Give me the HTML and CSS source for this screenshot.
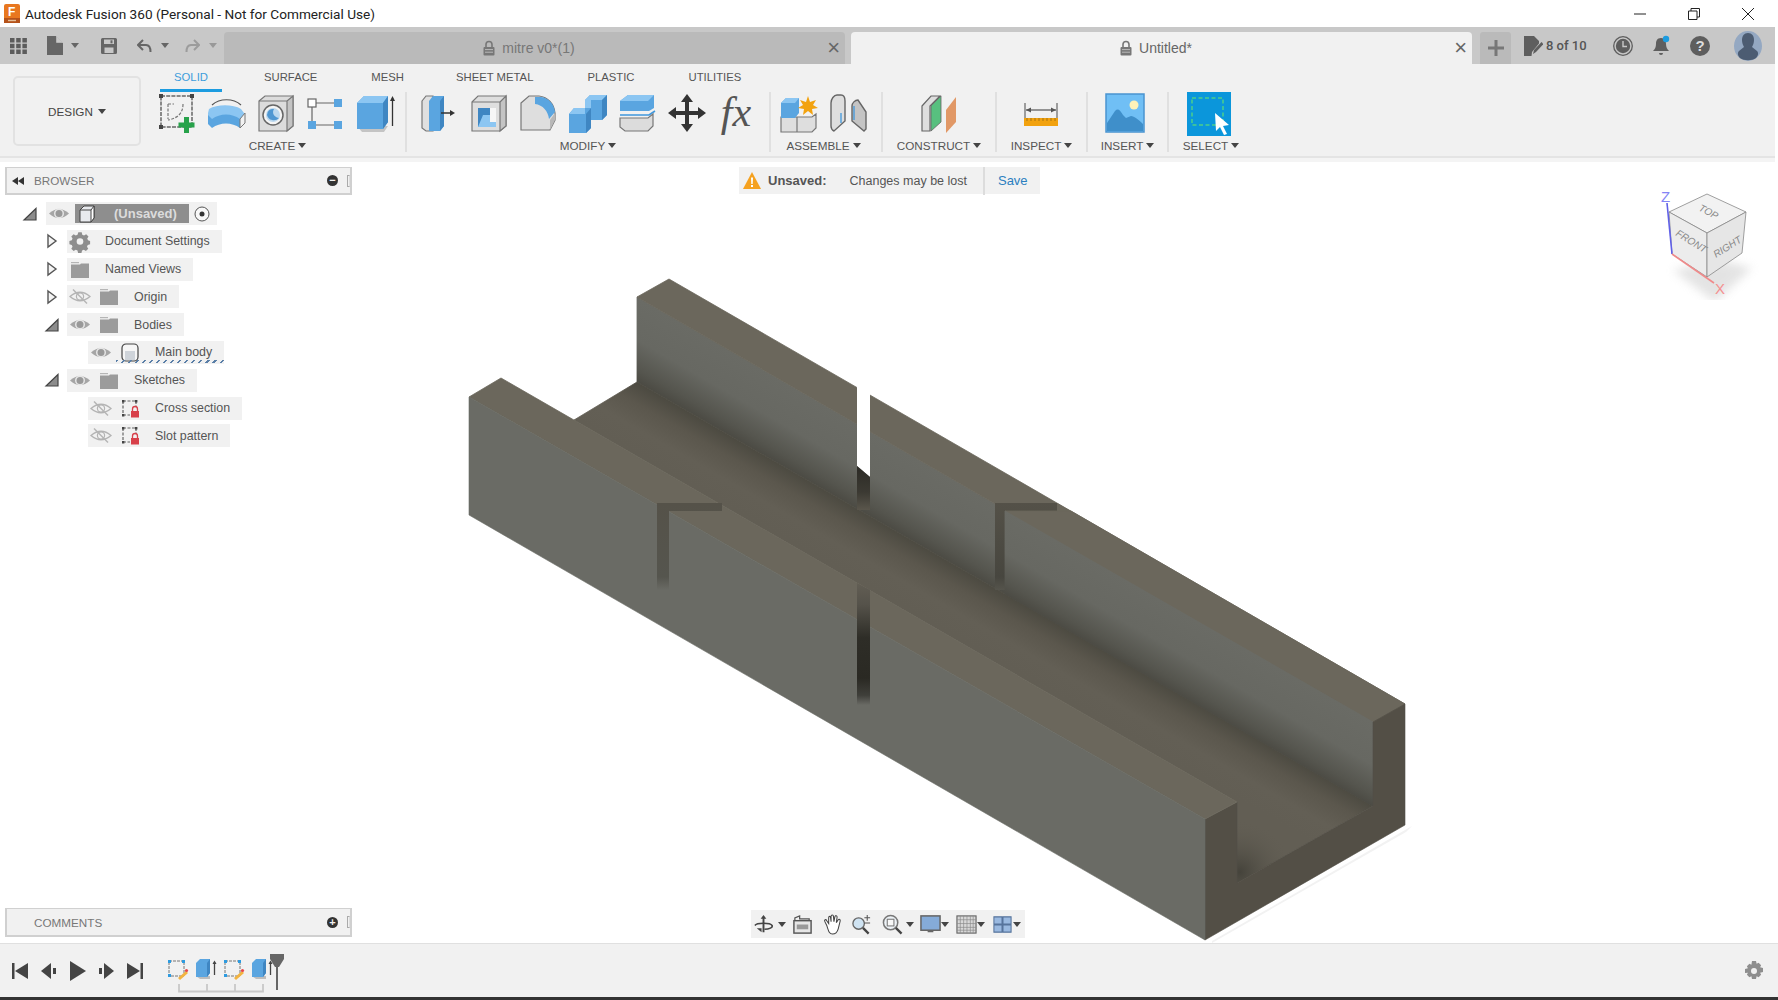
FILE: index.html
```html
<!DOCTYPE html>
<html lang="en">
<head>
  <meta charset="UTF-8">
  <meta name="viewport" content="width=device-width, initial-scale=1.0">
  <title>Autodesk Fusion 360</title>
  <link rel="stylesheet" href="styles.css">
</head>
<body>

<svg class="defs" width="0" height="0">
  <defs>
    <symbol id="eye" viewBox="0 0 26 23">
      <path d="M3 11.500Q13 2.500 23 11.500Q13 20.500 3 11.500z" fill="#a6a6a6"/>
      <circle cx="13" cy="11.500" r="5" fill="#e6e6e6"/>
      <circle cx="13" cy="11.500" r="3.500" fill="#999"/>
    </symbol>
    <symbol id="eye-off" viewBox="0 0 26 23">
      <path d="M3 11.500Q13 3 23 11.500Q13 20 3 11.500z" fill="none" stroke="#b4b4b4" stroke-width="1.300"/>
      <circle cx="13" cy="11.500" r="3.600" fill="none" stroke="#b4b4b4" stroke-width="1.200"/>
      <path d="M6 4.500l14 14" stroke="#b4b4b4" stroke-width="1.400"/>
    </symbol>
    <symbol id="folder" viewBox="0 0 26 23">
      <path d="M4 4h8v1.200H4z" fill="#b5b5b5"/>
      <path d="M4 6.500h9l1-1h8V20H4z" fill="#9b9b9b"/>
    </symbol>
    <symbol id="sketch-lock" viewBox="0 0 26 23">
      <path d="M6 4h13M6 4v14M6 18h7M19 4v6" fill="none" stroke="#666" stroke-width="1.200" stroke-dasharray="3 1.500"/>
      <path d="M5 3h2.400v2.400H5zM18 3h2.400v2.400H18zM5 17h2.400v2.400H5z" fill="#444"/>
      <path d="M15.500 14v-2a2.500 2.500 0 0 1 5 0v2" fill="none" stroke="#d8404a" stroke-width="1.300"/>
      <rect x="14" y="14" width="8" height="6.500" fill="#d8404a"/>
    </symbol>
    <symbol id="twisty-open" viewBox="0 0 16 16">
      <path d="M2 14L14 2.500V14z" fill="#8c8c8c" stroke="#444" stroke-width="1.200"/>
    </symbol>
    <symbol id="twisty-closed" viewBox="0 0 16 16">
      <path d="M4 2l8 6-8 6z" fill="#f4f4f4" stroke="#555" stroke-width="1.400"/>
    </symbol>
    <symbol id="lock" viewBox="0 0 14 16">
      <path d="M4 7V4.500a3 3 0 0 1 6 0V7" fill="none" stroke="#777" stroke-width="1.600"/>
      <rect x="1.500" y="7" width="11" height="8.500" rx="1" fill="#777"/>
      <path d="M3 9.600h8M3 12.200h8" stroke="#ccc" stroke-width="0.800"/>
    </symbol>
    <symbol id="tl-sketch" viewBox="0 0 22 22">
      <rect x="2" y="3" width="15" height="15" fill="none" stroke="#777" stroke-width="1" stroke-dasharray="3 1"/>
      <path d="M1 2h3v3H1zM15 2h3v3h-3zM1 16h3v3H1z" fill="#2d9be0"/>
      <path d="M11 20l8-7 2 2-8 7z" fill="#f2b441"/>
      <circle cx="19.500" cy="12.500" r="1.600" fill="#e8484a"/>
    </symbol>
    <symbol id="tl-extrude" viewBox="0 0 22 22">
      <path d="M1 18l4 3h10v-3z" fill="#bdbdbd"/>
      <path d="M1 5l4-4h10v14l-3 4H1z" fill="#5aa5e0"/>
      <path d="M12 5l3-4v14l-3 4z" fill="#3f86c2"/>
      <path d="M19.500 17V4" stroke="#444" stroke-width="1.300"/>
      <path d="M17.500 6l2-3.500 2 3.500z" fill="#444"/>
    </symbol>
  </defs>
</svg>

<div class="window">
  <header class="titlebar">
    <svg class="app-logo" viewBox="0 0 18 19" width="18" height="19">
      <rect x="1" y="0" width="16" height="19" rx="2" fill="#e8771f"/>
      <rect x="1" y="14" width="16" height="5" fill="#b5521a"/>
      <rect x="5" y="15.800" width="8" height="1.400" fill="#e5c09a"/>
      <text x="5" y="12" class="app-logo-letter">F</text>
    </svg>
    <span class="title-text">Autodesk Fusion 360 (Personal - Not for Commercial Use)</span>
    <div class="win-controls">
      <svg viewBox="0 0 12 12" width="12" height="12"><path d="M0 6h12" stroke="#222" stroke-width="1"/></svg>
      <svg viewBox="0 0 12 12" width="12" height="12"><path d="M.5 3h8.500v8.500H.5zM3 3V.5h8.500V9H9" fill="none" stroke="#222" stroke-width="1"/></svg>
      <svg viewBox="0 0 12 12" width="12" height="12"><path d="M0 0l12 12M12 0L0 12" stroke="#222" stroke-width="1"/></svg>
    </div>
  </header>

  <div class="tabbar">
    <div class="quick-tools">
      <svg class="qt-grid" viewBox="0 0 17 16" width="17" height="16">
        <path d="M0 0h4.500v4.500H0zM6.200 0h4.500v4.500H6.200zM12.400 0h4.500v4.500h-4.500zM0 5.800h4.500v4.500H0zM6.200 5.800h4.500v4.500H6.200zM12.400 5.800h4.500v4.500h-4.500zM0 11.600h4.500v4.400H0zM6.200 11.600h4.500v4.400H6.200zM12.400 11.600h4.500v4.400h-4.500z" fill="#5c5c5c"/>
      </svg>
      <svg class="qt-file" viewBox="0 0 16 19" width="16" height="19"><path d="M0 0h9l7 7v12H0z" fill="#666"/><path d="M9.500 0v6.500H16" fill="#c8c8c8" stroke="#c8c8c8" stroke-width=".6"/></svg>
      <i class="caret qt-caret"></i>
      <svg class="qt-save" viewBox="0 0 16 16" width="16" height="16"><path d="M0 1.500A1.500 1.500 0 0 1 1.500 0h13A1.500 1.500 0 0 1 16 1.500v13a1.500 1.500 0 0 1-1.500 1.500h-13A1.500 1.500 0 0 1 0 14.500z" fill="#666"/><path d="M3 1.500h10v4.500H3zM3.500 9.500h9V15h-9z" fill="#c8c8c8"/><path d="M9.500 2.300h2v3h-2z" fill="#666"/></svg>
      <svg class="qt-undo" viewBox="0 0 15 14" width="15" height="14"><path d="M6 1L1 6l5 5M1.500 6H9c3 0 4.500 2 4.500 7" fill="none" stroke="#666" stroke-width="2"/></svg>
      <i class="caret qt-caret-sm"></i>
      <svg class="qt-redo" viewBox="0 0 15 14" width="15" height="14"><path d="M9 1l5 5-5 5M13.500 6H6c-3 0-4.500 2-4.500 7" fill="none" stroke="#9c9c9c" stroke-width="2"/></svg>
      <i class="caret qt-caret-sm qt-caret-off"></i>
    </div>
    <div class="doc-tab doc-tab-off">
      <span class="doc-name"><svg width="14" height="16"><use href="#lock"/></svg>mitre v0*(1)</span>
      <span class="doc-close">×</span>
    </div>
    <div class="doc-tab doc-tab-on">
      <span class="doc-name"><svg width="14" height="16"><use href="#lock"/></svg>Untitled*</span>
      <span class="doc-close">×</span>
    </div>
    <div class="new-tab">
      <svg viewBox="0 0 16 16" width="16" height="16"><path d="M8 0v16M0 8h16" stroke="#777" stroke-width="3"/></svg>
    </div>
    <div class="job-status">
      <svg viewBox="0 0 19 20" width="19" height="20"><path d="M0 0h10l5 5v2.500L8 16l-.5 4H0z" fill="#5e5e5e"/><path d="M9 18l1-4 7.500-8 2 2-7.500 8z" fill="#5e5e5e"/></svg>
      <span>8 of 10</span>
    </div>
    <svg class="status-icon clock-icon" viewBox="0 0 20 20" width="20" height="20"><circle cx="10" cy="10" r="9.300" fill="none" stroke="#5e5e5e" stroke-width="1.300"/><circle cx="10" cy="10" r="7.200" fill="#5e5e5e"/><path d="M10 5v5.500h4" fill="none" stroke="#c8c8c8" stroke-width="1.400"/></svg>
    <svg class="status-icon bell-icon" viewBox="0 0 20 22" width="20" height="22"><path d="M9 3c4 0 5 3 5 6 0 3 1 5 3 7H1c2-2 3-4 3-7 0-3 1-6 5-6z" fill="#5e5e5e"/><path d="M7 18h4a2 2 0 0 1-4 0z" fill="#5e5e5e"/><circle cx="14" cy="4" r="3.200" fill="#1c9ce0"/></svg>
    <svg class="status-icon help-icon" viewBox="0 0 20 20" width="20" height="20"><circle cx="10" cy="10" r="10" fill="#5e5e5e"/><text x="10" y="15" class="help-mark">?</text></svg>
    <svg class="avatar" viewBox="0 0 28 30" width="28" height="30"><ellipse cx="14" cy="15" rx="14" ry="15" fill="#94a8c2"/><path d="M14 2c4 0 6 3 6 7 0 3-1 5-2 7l5 4c2 2 1 5-1 7-4 3-12 3-16 0-2-2-3-5-1-7l5-4c-1-2-2-4-2-7 0-4 2-7 6-7z" fill="#4c5c72"/></svg>
  </div>

  <div class="toolbar">
    <button class="design-btn">DESIGN<i class="caret"></i></button>
    <div class="toolbar-main">
      <nav class="mode-tabs">
        <span class="mode-tab mode-solid">SOLID</span>
        <span class="mode-tab mode-surface">SURFACE</span>
        <span class="mode-tab mode-mesh">MESH</span>
        <span class="mode-tab mode-sheet">SHEET METAL</span>
        <span class="mode-tab mode-plastic">PLASTIC</span>
        <span class="mode-tab mode-util">UTILITIES</span>
      </nav>
      <div class="tool-groups">

        <section class="tool-group g-create">
          <div class="tool-icons">
            <svg class="tool" viewBox="0 0 40 40">
              <rect x="4" y="3" width="31" height="31" fill="none" stroke="#666" stroke-width="1.500" stroke-dasharray="4 1.200"/>
              <path d="M2 1h4v4H2zM33 1h4v4h-4zM2 32h4v4H2z" fill="#444"/>
              <path d="M11 11h6M11 11v15M26 11c0 8-4 14-15 16" fill="none" stroke="#777" stroke-width="1.200" stroke-dasharray="3 1.500"/>
              <path d="M27 24h5v5.500h5.500v5H32V40h-5v-5.500h-5.500v-5H27z" fill="#27a24a"/>
            </svg>
            <svg class="tool" viewBox="0 0 40 40">
              <path d="M6 12C14 5 27 5 35 12" fill="none" stroke="#555" stroke-width="1.200"/>
              <path d="M3 16c8-5 24-5 32 0l3 4v9l-4 5c-8-6-20-6-28 0l-4-5V20z" fill="#8cc6f2"/>
              <path d="M2 22l4 4c8-6 20-6 28 0v9c-8-6-20-6-28 0l-4-4z" fill="#5aa5e0"/>
              <path d="M34 26l5-6v10l-5 5z" fill="#f2f2f2" stroke="#777"/>
            </svg>
            <svg class="tool" viewBox="0 0 40 40">
              <path d="M3 8l6-5h28v30l-6 5H3z" fill="#dcdcdc" stroke="#777" stroke-width="1.200"/>
              <path d="M31 8l6-5v30l-6 5zM3 8h28" fill="#c4c4c4" stroke="#777" stroke-width="1.200"/>
              <circle cx="17" cy="22" r="10" fill="#f4f4f4" stroke="#666" stroke-width="1.500"/>
              <circle cx="17" cy="22" r="7" fill="#bcd8ee"/>
              <path d="M11 22a6 6 0 0 1 7-6c-2 3-1 8 5 9a7 7 0 0 1-12-3z" fill="#4f97d2"/>
            </svg>
            <svg class="tool" viewBox="0 0 40 40">
              <rect x="3" y="6" width="8" height="8" fill="#fff" stroke="#666" stroke-width="1.200"/>
              <rect x="29" y="6" width="8" height="8" fill="#5aa5e0"/>
              <rect x="3" y="28" width="8" height="8" fill="#5aa5e0"/>
              <rect x="29" y="28" width="8" height="8" fill="#5aa5e0"/>
              <path d="M11 10h18M11 32h18M7 14v14" stroke="#666" stroke-width="1.200"/>
            </svg>
            <svg class="tool" viewBox="0 0 40 40">
              <path d="M2 33l5 6h22l4-6z" fill="#c4c4c4"/>
              <path d="M2 10l7-7h24v26l-5 7H2z" fill="#5aa5e0"/>
              <path d="M2 10l7-7h24l-5 7z" fill="#8cc6f2"/>
              <path d="M28 10l5-7v26l-5 7z" fill="#3f86c2"/>
              <path d="M37.500 33V5" stroke="#333" stroke-width="1.300"/>
              <path d="M35 8l2.500-5L40 8z" fill="#333"/>
            </svg>
          </div>
          <div class="group-label">CREATE<i class="caret"></i></div>
        </section>

        <section class="tool-group g-modify">
          <div class="tool-icons">
            <svg class="tool" viewBox="0 0 40 40">
              <path d="M3 8l4-5h7v35H7l-4-3z" fill="#e0e0e0" stroke="#777" stroke-width="1.200"/>
              <path d="M10 8l4-5h11v30l-4 5H10z" fill="#5aa5e0"/>
              <path d="M21 8l4-5v30l-4 5z" fill="#3f86c2"/>
              <path d="M22 20h11" stroke="#333" stroke-width="1.500"/>
              <path d="M31 17l5 3-5 3z" fill="#333"/>
            </svg>
            <svg class="tool" viewBox="0 0 40 40">
              <path d="M3 9l6-6h28v30l-6 5H3z" fill="#dedede" stroke="#777" stroke-width="1.200"/>
              <path d="M31 9l6-6v30l-6 5zM3 9h28" fill="#c4c4c4" stroke="#777" stroke-width="1.200"/>
              <path d="M9 15h12v14h6v5H9z" fill="#3f86c2"/>
              <path d="M14 22h7v7h6v5H9z" fill="#8cc6f2"/>
              <path d="M21 15h6v14h-6z" fill="#f6f6f6"/>
            </svg>
            <svg class="tool" viewBox="0 0 40 40">
              <path d="M3 10l8-7h10c9 1 15 8 16 17v7l-5 10H3z" fill="#dedede" stroke="#777" stroke-width="1.200"/>
              <path d="M32 27l5-7v7l-5 10z" fill="#b8b8b8"/>
              <path d="M17 4h6c8 1 13 7 14 15l-6 7c-1-8-6-14-14-15z" fill="#5aa5e0"/>
            </svg>
            <svg class="tool" viewBox="0 0 40 40">
              <path d="M1 21l5-6h11V7l5-5h17v20l-5 5H23v8l-5 5H1z" fill="#5aa5e0"/>
              <path d="M17 15V7l5-5h17l-5 5H23v8zM1 21l5-6h11v6z" fill="#8cc6f2"/>
              <path d="M34 7l5-5v20l-5 5zM18 21l5-6v20l-5 5z" fill="#3f86c2"/>
            </svg>
            <svg class="tool" viewBox="0 0 40 40">
              <path d="M3 8l8-6h26v13l-5 3H3z" fill="#5aa5e0"/>
              <path d="M3 8l8-6h26l-6 6z" fill="#8cc6f2"/>
              <path d="M3 22h29l6-4" fill="none" stroke="#3f97dc" stroke-width="1.600"/>
              <path d="M3 25h28l5-4v12l-5 5H8l-5-4z" fill="#dcdcdc" stroke="#777" stroke-width="1.200"/>
            </svg>
            <svg class="tool" viewBox="0 0 40 40">
              <path d="M20 1l6 8h-4v9h9v-4l8 6-8 6v-4h-9v9h4l-6 8-6-8h4v-9H9v4l-8-6 8-6v4h9V9h-4z" fill="#333"/>
            </svg>
            <span class="tool tool-fx">fx</span>
          </div>
          <div class="group-label">MODIFY<i class="caret"></i></div>
        </section>

        <section class="tool-group g-assemble">
          <div class="tool-icons">
            <svg class="tool" viewBox="0 0 40 40">
              <path d="M2 24h16v15H2zM18 24h15l4-3v14l-4 4H18z" fill="#dedede" stroke="#777" stroke-width="1.200"/>
              <path d="M2 10l5-5h13v15l-4 5H2z" fill="#5aa5e0"/>
              <path d="M2 10l5-5h13l-4 5z" fill="#8cc6f2"/>
              <path d="M29 3l2 6 6-2-3 5 5 3-6 1 1 6-5-4-5 4 1-6-6-1 5-3-3-5 6 2z" fill="#f2a20f"/>
            </svg>
            <svg class="tool" viewBox="0 0 40 40">
              <path d="M3 10c0-4 3-8 6-8h4c3 0 4 3 4 6v20L6 38c-2-1-3-3-3-5z" fill="#dedede" stroke="#666" stroke-width="1.400"/>
              <path d="M24 13c0-3 3-6 6-6l8 12v17l-2 2-12-10z" fill="#c4c4c4" stroke="#666" stroke-width="1.400"/>
              <path d="M13 20v10M26 13v14" stroke="#3f97dc" stroke-width="1.300"/>
            </svg>
          </div>
          <div class="group-label">ASSEMBLE<i class="caret"></i></div>
        </section>

        <section class="tool-group g-construct">
          <div class="tool-icons">
            <svg class="tool" viewBox="0 0 40 40">
              <path d="M4 13L13 3h9L12 13v25H4z" fill="#dedede" stroke="#666" stroke-width="1.200"/>
              <path d="M13 13L23 3v26L13 38z" fill="#58c07f" stroke="#666" stroke-width=".8"/>
              <path d="M28 17l10-13v25l-10 11z" fill="#e19866"/>
            </svg>
          </div>
          <div class="group-label">CONSTRUCT<i class="caret"></i></div>
        </section>

        <section class="tool-group g-inspect">
          <div class="tool-icons">
            <svg class="tool" viewBox="0 0 40 40">
              <path d="M4 10v15M36 10v15" stroke="#666" stroke-width="1.200"/>
              <path d="M5 17h30" stroke="#555" stroke-width="1.200"/>
              <path d="M5 17l5-2.500v5zM35 17l-5-2.500v5z" fill="#555"/>
              <rect x="3" y="25" width="34" height="8" fill="#f2a20f"/>
              <path d="M6 25v3M10 25v3M14 25v3M18 25v3M22 25v3M26 25v3M30 25v3M34 25v3" stroke="#a87410" stroke-width="1"/>
            </svg>
          </div>
          <div class="group-label">INSPECT<i class="caret"></i></div>
        </section>

        <section class="tool-group g-insert">
          <div class="tool-icons">
            <svg class="tool" viewBox="0 0 40 40">
              <rect x="1" y="1" width="38" height="38" fill="#70bff5" stroke="#4a94d0" stroke-width="1.500"/>
              <circle cx="29" cy="12" r="4.500" fill="#fff2b8"/>
              <path d="M2 30l8-12c3-3 5-1 8 4l3 3 5-2c3 0 8 4 12 8v7H2z" fill="#3f8fca"/>
            </svg>
          </div>
          <div class="group-label">INSERT<i class="caret"></i></div>
        </section>

        <section class="tool-group g-select">
          <div class="tool-icons">
            <svg class="tool tool-select" viewBox="0 0 44 44">
              <rect width="44" height="44" fill="#0b96db"/>
              <rect x="5" y="6" width="31" height="27" fill="none" stroke="#4ccf8c" stroke-width="1.500" stroke-dasharray="4 2.500"/>
              <path d="M28 21l1 18 4-4 4 8 3-1-4-8 6-1z" fill="#fff"/>
            </svg>
          </div>
          <div class="group-label">SELECT<i class="caret"></i></div>
        </section>

      </div>
    </div>
  </div>

  <main class="viewport">
    <svg class="model" viewBox="0 162 1778 781" width="1778" height="781">
      <defs>
        <linearGradient id="back-wall" gradientUnits="userSpaceOnUse" x1="637" y1="297" x2="600" y2="361">
          <stop offset="0" stop-color="#6a6b65"/>
          <stop offset="0.5" stop-color="#676862"/>
          <stop offset="0.85" stop-color="#55554e"/>
          <stop offset="1" stop-color="#4b4a43"/>
        </linearGradient>
        <linearGradient id="floor" gradientUnits="userSpaceOnUse" x1="637" y1="382" x2="606" y2="436">
          <stop offset="0" stop-color="#4c4a41"/>
          <stop offset="0.3" stop-color="#5b574d"/>
          <stop offset="0.65" stop-color="#635f55"/>
          <stop offset="1" stop-color="#625e54"/>
        </linearGradient>
        <linearGradient id="cut-deep" x1="0" y1="0" x2="0" y2="1">
          <stop offset="0" stop-color="#625e54"/>
          <stop offset="0.18" stop-color="#55524a"/>
          <stop offset="0.45" stop-color="#2e2d27"/>
          <stop offset="0.78" stop-color="#2a2923"/>
          <stop offset="0.92" stop-color="#3f3f3a"/>
          <stop offset="1" stop-color="#6a6b65"/>
        </linearGradient>
        <linearGradient id="cut-back" x1="0" y1="0" x2="0" y2="1">
          <stop offset="0" stop-color="#2b2a25"/>
          <stop offset="0.6" stop-color="#3c3a33"/>
          <stop offset="1" stop-color="#5a564c"/>
        </linearGradient>
        <linearGradient id="notch" x1="0" y1="0" x2="0" y2="1">
          <stop offset="0" stop-color="#555249"/>
          <stop offset="0.85" stop-color="#55554e"/>
          <stop offset="1" stop-color="#6a6b65"/>
        </linearGradient>
        <linearGradient id="notch-dark" x1="0" y1="0" x2="0" y2="1">
          <stop offset="0" stop-color="#545148"/>
          <stop offset="0.85" stop-color="#47463f"/>
          <stop offset="1" stop-color="#55544c"/>
        </linearGradient>
        <radialGradient id="floor-corner" gradientUnits="userSpaceOnUse" cx="1240" cy="872" r="52">
          <stop offset="0" stop-color="#45433b"/>
          <stop offset="1" stop-color="#625e54" stop-opacity="0"/>
        </radialGradient>
      </defs>
      <polygon points="1212,941 1412,826 1406,832 1212,943" fill="#f2f2f2"/>
      <polygon points="637,297 1373,722 1373,806 637,382" fill="url(#back-wall)" stroke="url(#back-wall)" stroke-width=".8"/>
      <polygon points="669,279 1405,704 1373,722 637,297" fill="#6b675c" stroke="#6b675c" stroke-width=".8"/>
      <polygon points="574,420 637,382 1373,806 1237,883 1237,802" fill="url(#floor)" stroke="url(#floor)" stroke-width=".8"/>
      <polygon points="574,420 637,382 1373,806 1237,883 1237,802" fill="url(#floor-corner)"/>
      <polygon points="857,380 870,380 870,477 857,466" fill="#fff"/>
      <polygon points="857,466 870,477 870,510 857,510" fill="url(#cut-back)"/>
      <polygon points="995,503 1057,503 1057,511 1005,511 1005,590 995,590" fill="url(#notch-dark)"/>
      <polygon points="1057,503 1071,511 1057,511" fill="#6b675c"/>
      <polygon points="1005,511 1071,511 1405,704 1373,722" fill="#6b675c" stroke="#6b675c" stroke-width=".8"/>
      <polygon points="1005,511 1373,722 1373,806 1005,594" fill="url(#back-wall)" stroke="url(#back-wall)" stroke-width=".8"/>
      <polygon points="1373,722 1405,704 1405,825 1205,940 1205,819 1237,802 1237,883 1373,806" fill="#534f46" stroke="#534f46" stroke-width=".6"/>
      <polygon points="469,397 501,378 1237,802 1205,819" fill="#6b675c" stroke="#6b675c" stroke-width=".8"/>
      <polygon points="469,397 1205,819 1205,940 469,515" fill="#6a6b65" stroke="#6a6b65" stroke-width=".6"/>
      <polygon points="657,503 722,503 722,511 669,511 669,590 657,590" fill="url(#notch)"/>
      <polygon points="857,583 870,590 870,705 857,705" fill="url(#cut-deep)"/>
    </svg>

    <aside class="browser-panel">
      <div class="panel-head">
        <svg class="panel-back" viewBox="0 0 12 8" width="12" height="8"><path d="M6 0v8L0 4zM12 0v8L6 4z" fill="#333"/></svg>
        <span class="panel-title">BROWSER</span>
        <span class="panel-toggle">−</span>
        <i class="panel-grip"></i>
      </div>
      <div class="tree">
        <div class="row l0">
          <svg class="twisty"><use href="#twisty-open"/></svg>
          <div class="chip chip-root">
            <svg class="slot"><use href="#eye"/></svg>
            <div class="root-label">
              <svg viewBox="0 0 20 18" width="20" height="18"><path d="M2 5l4-4h10v12l-3 4H2z" fill="#e8eaee" stroke="#444" stroke-width="1"/><path d="M13 5l3-4v12l-3 4z" fill="#fff" stroke="#444" stroke-width="1"/><path d="M2 5h11" stroke="#444"/></svg>
              <span>(Unsaved)</span>
            </div>
            <svg class="radio" viewBox="0 0 16 16" width="16" height="16"><circle cx="8" cy="8" r="7" fill="#f8f8f8" stroke="#555" stroke-width="1"/><circle cx="8" cy="8" r="2.500" fill="#333"/></svg>
          </div>
        </div>
        <div class="row l1">
          <svg class="twisty"><use href="#twisty-closed"/></svg>
          <div class="chip">
            <svg class="slot" viewBox="0 0 26 23"><path d="M11 2h4l.7 2.800 2.100.9 2.500-1.500 2.800 2.800-1.500 2.500.9 2.100 2.500.7v4l-2.800.7-.9 2.100 1.500 2.500-2.800 2.800-2.500-1.500-2.100.9-.7 2.800h-4l-.7-2.800-2.100-.9-2.500 1.500-2.800-2.800 1.500-2.500-.9-2.100-2.800-.7v-4l2.800-.7.9-2.100-1.500-2.500 2.800-2.800 2.500 1.500 2.100-.9z" fill="#8e8e8e" transform="translate(2.100 .6) scale(.84)"/><circle cx="13" cy="11.500" r="3.300" fill="#f1f1f1"/></svg>
            <span class="name">Document Settings</span>
          </div>
        </div>
        <div class="row l1">
          <svg class="twisty"><use href="#twisty-closed"/></svg>
          <div class="chip">
            <svg class="slot"><use href="#folder"/></svg>
            <span class="name">Named Views</span>
          </div>
        </div>
        <div class="row l1">
          <svg class="twisty"><use href="#twisty-closed"/></svg>
          <div class="chip">
            <svg class="slot"><use href="#eye-off"/></svg>
            <svg class="slot"><use href="#folder"/></svg>
            <span class="name">Origin</span>
          </div>
        </div>
        <div class="row l1">
          <svg class="twisty"><use href="#twisty-open"/></svg>
          <div class="chip">
            <svg class="slot"><use href="#eye"/></svg>
            <svg class="slot"><use href="#folder"/></svg>
            <span class="name">Bodies</span>
          </div>
        </div>
        <div class="row l2">
          <div class="chip">
            <svg class="slot"><use href="#eye"/></svg>
            <svg class="slot" viewBox="0 0 26 23"><rect x="5" y="3" width="16" height="17" rx="4" fill="#f6f6f6" stroke="#444" stroke-width="1.200"/><rect x="8" y="10" width="10" height="9" fill="#cfd4da"/></svg>
            <span class="name name-warn">Main body</span>
            <i class="warn-line"></i>
          </div>
        </div>
        <div class="row l1">
          <svg class="twisty"><use href="#twisty-open"/></svg>
          <div class="chip">
            <svg class="slot"><use href="#eye"/></svg>
            <svg class="slot"><use href="#folder"/></svg>
            <span class="name">Sketches</span>
          </div>
        </div>
        <div class="row l2">
          <div class="chip">
            <svg class="slot"><use href="#eye-off"/></svg>
            <svg class="slot"><use href="#sketch-lock"/></svg>
            <span class="name">Cross section</span>
          </div>
        </div>
        <div class="row l2">
          <div class="chip">
            <svg class="slot"><use href="#eye-off"/></svg>
            <svg class="slot"><use href="#sketch-lock"/></svg>
            <span class="name">Slot pattern</span>
          </div>
        </div>
      </div>
    </aside>

    <div class="notice">
      <svg viewBox="0 0 18 17" width="18" height="17"><path d="M9 0l9 17H0z" fill="#f5a11f"/><path d="M8 5.500h2l-.3 6.500H8.300zM8 13h2v2H8z" fill="#fff"/></svg>
      <strong>Unsaved:</strong>
      <span class="notice-text">Changes may be lost</span>
      <span class="notice-save">Save</span>
    </div>

    <div class="viewcube">
      <svg viewBox="-6 -8 106 118" width="106" height="118">
        <defs>
          <filter id="cube-shadow"><feGaussianBlur stdDeviation="5"/></filter>
        </defs>
        <polygon points="13,80 55,112 92,78 60,70" fill="#bbb" opacity=".4" filter="url(#cube-shadow)"/>
        <polygon points="47,4 86,22 47,43 9,22" fill="#f2f2f2" stroke="#888" stroke-width=".8"/>
        <polygon points="9,22 47,43 47,87 12,64" fill="#ececec" stroke="#888" stroke-width=".8"/>
        <polygon points="47,43 86,22 82,63 47,87" fill="#e6e6e6" stroke="#888" stroke-width=".8"/>
        <path d="M7 13l5 51" stroke="#6060e8" stroke-width="1.600"/>
        <path d="M12 64l42 29" stroke="#f08a8a" stroke-width="1.600"/>
        <text x="1" y="12" class="axis axis-z">Z</text>
        <text x="55" y="104" class="axis axis-x">X</text>
        <text class="face" transform="translate(38 20) rotate(28)">TOP</text>
        <text class="face" transform="translate(15 45) rotate(32)">FRONT</text>
        <text class="face" transform="translate(56 68) rotate(-32)">RIGHT</text>
      </svg>
    </div>

    <aside class="comments-panel">
      <span class="panel-title">COMMENTS</span>
      <span class="panel-toggle">+</span>
      <i class="panel-grip"></i>
    </aside>

    <div class="nav-bar">
      <svg class="nav-ico" viewBox="0 0 22 22"><path d="M11 1l3 4h-2v14h-2V5H8z" fill="#444"/><path d="M2 12c2-3 16-3 18 0 1 2-3 4-8 4" fill="none" stroke="#444" stroke-width="1.600"/><path d="M4 15l5 0v4z" fill="#444"/></svg>
      <i class="caret nav-caret-first"></i>
      <svg class="nav-ico nav-cam" viewBox="0 0 22 22"><rect x="2" y="7" width="18" height="13" fill="#e6e6e6" stroke="#555" stroke-width="1.500"/><rect x="5" y="11" width="12" height="5" fill="#999"/><path d="M3 7V4l5-2v3l10 0v2" fill="none" stroke="#555" stroke-width="1.300"/></svg>
      <svg class="nav-ico nav-hand" viewBox="0 0 22 22"><path d="M5 12L3 8c-1-2 1-3 2-1l2 3V4c0-2 2-2 2 0l.5 4V2.500c0-2 2.500-2 2.500 0L12.500 8l1-5c.4-2 2.500-1.500 2.300.4L15 9l2-3c1-1 2.500 0 2 1.500l-2 8C16 19 14 21 11 21c-3 0-4-2-6-9z" fill="#fff" stroke="#444" stroke-width="1.100"/></svg>
      <svg class="nav-ico nav-zoomfit" viewBox="0 0 22 22"><circle cx="8" cy="10" r="6" fill="#cfe3f2" stroke="#666" stroke-width="1.400"/><path d="M12.500 14.500l6 6" stroke="#444" stroke-width="2.400"/><path d="M17 1v6M14 4h6M14 9.500h6" stroke="#555" stroke-width="1.100"/></svg>
      <svg class="nav-ico nav-zoom" viewBox="0 0 22 22"><circle cx="9" cy="9" r="7.500" fill="#eef3f7" stroke="#777" stroke-width="1.600"/><rect x="5.500" y="5.500" width="7" height="7" fill="#f8f8f8" stroke="#777" stroke-width="1.100"/><path d="M14.500 14.500l6 6" stroke="#444" stroke-width="2.400"/></svg>
      <i class="caret nav-caret-zoom"></i>
      <svg class="nav-ico nav-display" viewBox="0 0 22 22"><rect x="1" y="2" width="20" height="15" fill="#85abd8" stroke="#666" stroke-width="1.600"/><path d="M8 18.500h6M11 17v2" stroke="#666" stroke-width="1.400"/></svg>
      <i class="caret nav-caret"></i>
      <svg class="nav-ico nav-gridbtn" viewBox="0 0 22 22"><rect x="1" y="2" width="20" height="18" fill="#d8d8d8" stroke="#666" stroke-width="1.200"/><path d="M4.500 2v18M8 2v18M11.500 2v18M15 2v18M18 2v18M1 6h20M1 10h20M1 14h20M1 17h20" stroke="#888" stroke-width=".7"/></svg>
      <i class="caret nav-caret"></i>
      <svg class="nav-ico nav-views" viewBox="0 0 22 22"><path d="M2 3h8.500v7.500H2zM11.500 3H20v7.500h-8.500zM2 11.500h8.500V19H2zM11.500 11.500H20V19h-8.500z" fill="#9ab9e0" stroke="#57749c" stroke-width="1.100"/></svg>
      <i class="caret nav-caret"></i>
    </div>
  </main>

  <footer class="timeline">
    <div class="transport">
      <svg viewBox="0 0 16 16" width="16" height="16"><path d="M0 0h2.500v16H0zM16 0v16L3 8z" fill="#444"/></svg>
      <svg viewBox="0 0 16 16" width="16" height="16"><path d="M10 0v16L0 8zM12 5h3v6h-3z" fill="#444"/></svg>
      <svg viewBox="0 0 16 20" width="16" height="20"><path d="M0 0l16 10L0 20z" fill="#444"/></svg>
      <svg viewBox="0 0 16 16" width="16" height="16"><path d="M6 0v16l10-8zM1 5h3v6H1z" fill="#444"/></svg>
      <svg viewBox="0 0 16 16" width="16" height="16"><path d="M0 0v16l13-8zM13.500 0H16v16h-2.500z" fill="#444"/></svg>
    </div>
    <div class="features">
      <svg width="22" height="22"><use href="#tl-sketch"/></svg>
      <svg width="22" height="22"><use href="#tl-extrude"/></svg>
      <svg width="22" height="22"><use href="#tl-sketch"/></svg>
      <svg width="22" height="22"><use href="#tl-extrude"/></svg>
      <svg class="feature-bracket" viewBox="0 0 86 9" width="86" height="9"><path d="M1 0v7.500h84V0M29 0v7.500M57 0v7.500" fill="none" stroke="#c8c8c8" stroke-width="1.800"/></svg>
      <svg class="marker" viewBox="0 0 14 36" width="14" height="36"><path d="M0 0h14v5l-5 8H5L0 5z" fill="#666"/><path d="M6 10h2v26H6z" fill="#666"/></svg>
    </div>
    <svg class="timeline-gear" viewBox="0 0 20 20" width="20" height="20"><path d="M8 0h4l.6 2.700 2-.9 2.500 2.500-1 2 2.900.7v4l-2.900.7 1 2-2.500 2.500-2-1-.6 2.800H8l-.6-2.800-2 1-2.500-2.500 1-2L1 12V8l2.900-.7-1-2 2.500-2.500 2 .9z" fill="#8e8e8e"/><circle cx="10" cy="10" r="3" fill="#f1f1f1"/></svg>
  </footer>
  <div class="bottom-edge"></div>
</div>

</body>
</html>
```

FILE: styles.css
```css
* {
  box-sizing: border-box;
}

body {
  margin: 0;
  height: 1000px;
  overflow: hidden;
  background-color: #fff;
  font-family: "Liberation Sans", Arial, sans-serif;
  color: #555;
}

.defs {
  position: absolute;
}

.window {
  display: flex;
  flex-direction: column;
  height: 1000px;
}

.caret {
  display: inline-block;
  width: 0;
  height: 0;
  margin-left: 5px;
  border-left: 4px solid transparent;
  border-right: 4px solid transparent;
  border-top: 5px solid #444;
  vertical-align: 2px;
}

/* title bar */
.titlebar {
  display: flex;
  align-items: center;
  height: 27px;
  padding-left: 3px;
}

.app-logo-letter {
  font-size: 12px;
  font-weight: bold;
  fill: #fff;
}

.title-text {
  margin-left: 4px;
  font-family: "Roboto", sans-serif;
  font-size: 13.640px;
  color: #222;
}

.win-controls {
  display: flex;
  gap: 42px;
  margin-left: auto;
  padding-right: 24px;
}

/* tab bar */
.tabbar {
  display: flex;
  align-items: flex-end;
  height: 37px;
  margin-right: 3px;
  background-color: #c8c8c8;
}

.quick-tools {
  display: flex;
  align-items: center;
  align-self: center;
  width: 224px;
  padding-left: 10px;
}

.qt-file { margin-left: 20px; }
.qt-caret { margin-left: 8px; border-top-color: #666; }
.qt-save { margin-left: 22px; }
.qt-undo { margin-left: 20px; }
.qt-caret-sm { margin-left: 9px; border-top-color: #666; }
.qt-redo { margin-left: 16px; }
.qt-caret-off { border-top-color: #999; }

.doc-tab {
  position: relative;
  display: flex;
  align-items: center;
  justify-content: center;
  height: 32px;
  padding-right: 12px;
  border-radius: 4px 4px 0 0;
  font-size: 14px;
}

.doc-tab-off {
  width: 621px;
  background-color: #bababa;
  color: #777;
}

.doc-tab-on {
  width: 621px;
  margin-left: 6px;
  background-color: #f1f1f1;
  color: #666;
}

.doc-name {
  display: flex;
  align-items: center;
  gap: 6px;
}

.doc-close {
  position: absolute;
  right: 5px;
  top: 4px;
  font-size: 22px;
  line-height: 24px;
  color: #666;
}

.new-tab {
  display: flex;
  align-items: center;
  justify-content: center;
  width: 31px;
  height: 32px;
  margin-left: 8px;
  border-radius: 3px 3px 0 0;
  background-color: #bababa;
}

.job-status {
  display: flex;
  align-items: center;
  gap: 3px;
  align-self: center;
  margin-left: 13px;
  font-family: "Roboto", sans-serif;
  font-size: 13px;
  font-weight: 500;
  color: #555;
}

.status-icon {
  align-self: center;
  flex-shrink: 0;
}

.clock-icon { margin-left: 26px; }
.bell-icon { margin-left: 19px; }
.help-icon { margin-left: 18px; }

.help-mark {
  font-size: 15px;
  font-weight: bold;
  fill: #ddd;
  text-anchor: middle;
}

.avatar {
  align-self: center;
  margin-left: 24px;
}

/* toolbar */
.toolbar {
  display: flex;
  height: 98px;
  margin-right: 3px;
  padding-bottom: 4px;
  border-bottom: 4px solid #f4f4f4;
  background-color: #f1f1f1;
  box-shadow: inset 0 -2px 0 #e4e4e4;
}

.design-btn {
  width: 128px;
  height: 70px;
  margin: 12px 0 0 13px;
  border: 2px solid #e2e2e2;
  border-radius: 5px;
  background-color: #f1f1f1;
  padding-top: 1px;
  font-family: "Liberation Sans", Arial, sans-serif;
  font-size: 11.700px;
  color: #444;
}

.toolbar-main {
  flex: 1;
  margin-left: 9px;
}

.mode-tabs {
  display: flex;
  height: 28px;
  padding-top: 5px;
}

.mode-tab {
  height: 23px;
  padding-top: 1px;
  font-size: 11.300px;
  line-height: 14px;
  color: #555;
}

.mode-solid {
  width: 62px;
  margin-left: 10px;
  border-bottom: 3px solid #1c9ce0;
  text-align: center;
  color: #3d9ddc;
}

.mode-surface { margin-left: 42px; }
.mode-mesh { margin-left: 54px; }
.mode-sheet { margin-left: 52px; }
.mode-plastic { margin-left: 54px; }
.mode-util { margin-left: 54px; }

.tool-groups {
  display: flex;
  height: 62px;
}

.tool-group {
  display: flex;
  flex-direction: column;
  align-items: center;
  height: 60px;
  border-right: 2px solid #e0e0e0;
}

.g-create { width: 257px; }
.g-modify { width: 364px; }
.g-assemble { width: 112px; padding-right: 5px; }
.g-construct { width: 114px; }
.g-inspect { width: 91px; }
.g-insert { width: 81px; }
.g-select { width: 84px; border-right: 0; }

.tool-icons {
  display: flex;
  flex-shrink: 0;
  align-items: center;
  justify-content: center;
  height: 42px;
  gap: 9.500px;
}

.tool {
  width: 40px;
  height: 40px;
  flex-shrink: 0;
}

.g-create .tool-icons { margin-left: -4px; }
.g-modify .tool-icons { margin-left: -1px; }
.g-construct .tool-icons { margin-left: -2px; }
.g-inspect .tool-icons { margin-left: -2px; }
.g-insert .tool-icons { margin-left: -6px; }
.g-select .tool-icons { margin-left: -4px; }

.tool-select {
  width: 44px;
  height: 44px;
  margin-top: 1px;
}

.tool-fx {
  font-family: "Liberation Serif", serif;
  font-style: italic;
  font-size: 42px;
  line-height: 38px;
  text-align: center;
  color: #555;
}

.group-label {
  flex-shrink: 0;
  margin-top: 5px;
  font-size: 11.700px;
  line-height: 14px;
  color: #555;
}

.group-label .caret {
  margin-left: 3px;
}

/* canvas */
.viewport {
  position: relative;
  flex: 1;
  overflow: hidden;
  background-color: #fff;
}

.model {
  position: absolute;
  left: 0;
  top: 0;
}

/* browser panel */
.browser-panel {
  position: absolute;
  left: 5px;
  top: 5px;
  width: 347px;
}

.panel-head,
.comments-panel {
  display: flex;
  align-items: center;
  border: 2px solid #d0d0d0;
  border-top-width: 1px;
  background-color: #f1f1f1;
}

.panel-head {
  height: 28px;
  padding-left: 5px;
}

.panel-back {
  margin-right: 10px;
}

.panel-title {
  font-size: 11.700px;
  color: #777;
}

.panel-toggle {
  display: flex;
  align-items: center;
  justify-content: center;
  width: 11px;
  height: 11px;
  margin-left: auto;
  border-radius: 50%;
  background-color: #333;
  font-size: 11px;
  font-weight: bold;
  line-height: 11px;
  color: #f1f1f1;
}

.panel-grip {
  width: 3px;
  height: 12px;
  margin: 0 0 0 9px;
  border: 1px solid #aaa;
  border-right-color: #ddd;
}

.tree {
  margin-top: 7px;
}

.row {
  display: flex;
  align-items: center;
  height: 23px;
  margin-bottom: 4.800px;
}

.twisty {
  width: 16px;
  height: 16px;
  flex-shrink: 0;
}

.l0 { padding-left: 17px; }
.l0 .twisty { margin-right: 8px; }
.l1 { padding-left: 39px; }
.l1 .twisty { margin-right: 7px; }
.l2 { padding-left: 83px; }

.chip {
  position: relative;
  display: flex;
  align-items: center;
  gap: 3px;
  height: 23px;
  padding-right: 12px;
  background-color: #f1f1f1;
}

.slot {
  width: 26px;
  height: 23px;
  flex-shrink: 0;
}

.name {
  margin-left: 9px;
  font-size: 12.400px;
  color: #555;
}

.chip-root {
  padding-right: 0;
  width: 171px;
}

.root-label {
  display: flex;
  align-items: center;
  width: 114px;
  height: 19px;
  padding-left: 3px;
  background-color: #8e8e8e;
  font-size: 13px;
  font-weight: bold;
  color: #dcdcdc;
}

.root-label span {
  margin-left: 16px;
}

.radio {
  margin-left: 2px;
}

.warn-line {
  position: absolute;
  left: 28px;
  right: 0;
  bottom: 1px;
  height: 3px;
  background-image: repeating-linear-gradient(135deg, #5a7fa8 0 1.500px, transparent 1.500px 5px);
}

/* unsaved notice */
.notice {
  position: absolute;
  left: 739px;
  top: 5px;
  display: flex;
  align-items: center;
  width: 301px;
  height: 27px;
  padding-left: 4px;
  background-color: #f1f1f1;
  font-size: 12.500px;
}

.notice strong {
  margin-left: 7px;
  font-size: 13px;
  color: #555;
}

.notice-text {
  margin-left: 23px;
  color: #555;
}

.notice-save {
  margin-left: 16px;
  padding-left: 13px;
  border-left: 2px solid #dcdcdc;
  font-size: 13px;
  line-height: 28px;
  color: #2b7fc0;
}

/* view cube */
.viewcube {
  position: absolute;
  left: 1654px;
  top: 20px;
}

.axis {
  font-size: 15px;
}

.axis-z { fill: #8484f5; }
.axis-x { fill: #f59090; }

.face {
  font-size: 10px;
  fill: #888;
  font-style: italic;
}

/* comments */
.comments-panel {
  position: absolute;
  left: 5px;
  top: 746px;
  width: 347px;
  height: 29px;
  padding-left: 27px;
}

/* navigation bar */
.nav-bar {
  position: absolute;
  left: 751px;
  top: 748px;
  display: flex;
  align-items: center;
  width: 274px;
  height: 28px;
  padding-left: 2px;
  background-color: #f1f1f1;
}

.nav-ico {
  width: 21px;
  height: 21px;
  flex-shrink: 0;
}

.nav-caret { margin-left: 0.500px; }
.nav-caret-first { margin-left: 4px; }
.nav-caret-zoom { margin-left: 3.500px; }
.nav-cam { margin-left: 5.500px; }
.nav-hand { margin-left: 9px; }
.nav-zoomfit { margin-left: 8px; }
.nav-zoom { margin-left: 10px; }
.nav-display { margin-left: 5.500px; }
.nav-gridbtn { margin-left: 6.500px; }
.nav-views { margin-left: 6.500px; }

/* timeline */
.timeline {
  position: relative;
  display: flex;
  align-items: center;
  height: 54px;
  border-top: 1px solid #e0e0e0;
  background-color: #f1f1f1;
}

.transport {
  display: flex;
  align-items: center;
  gap: 12.800px;
  margin-left: 12px;
}

.features {
  position: relative;
  display: flex;
  align-items: center;
  gap: 6px;
  height: 52px;
  margin-left: 24px;
  padding-bottom: 4px;
}

.feature-bracket {
  position: absolute;
  left: 11px;
  top: 39px;
}

.marker {
  margin-left: -9.500px;
  margin-top: 6px;
}

.timeline-gear {
  margin-left: auto;
  margin-right: 14px;
}

.bottom-edge {
  height: 3px;
  background-color: #333;
}
```
